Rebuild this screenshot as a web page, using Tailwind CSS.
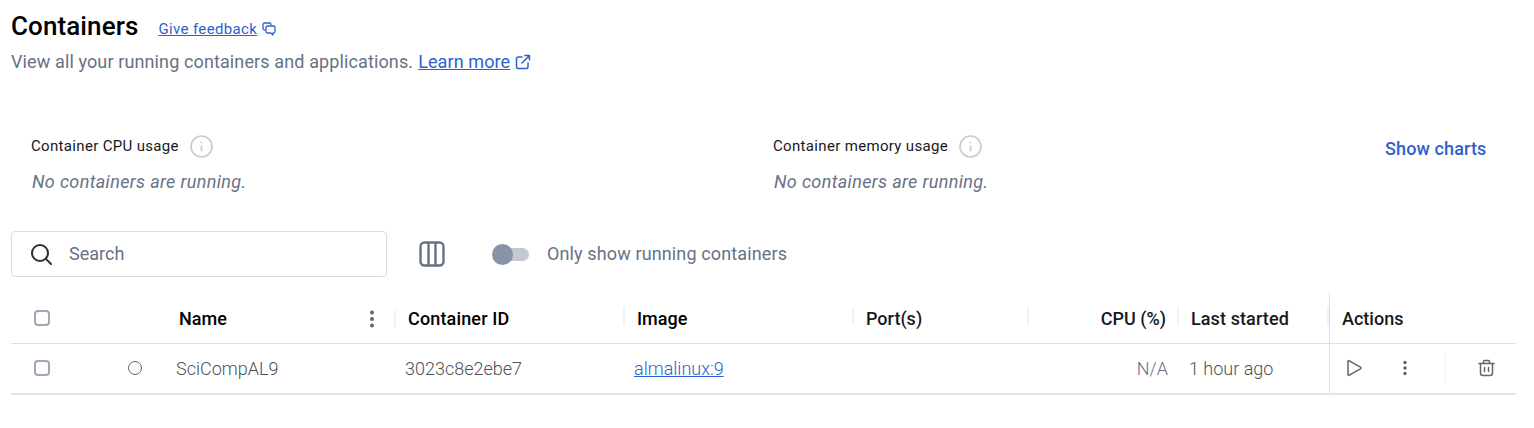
<!DOCTYPE html>
<html lang="en">
<head>
  <meta charset="UTF-8">
  <meta name="viewport" content="width=device-width, initial-scale=1.0">
  <title>Containers</title>
  <script src="https://cdn.jsdelivr.net/npm/@tailwindcss/browser@4"></script>
</head>
<body class="bg-white font-['Roboto',sans-serif] overflow-hidden">
<div class="w-[1534px] h-[428px] pl-[11px] pr-[18px]">

    <!-- page title -->
    <div class="flex items-center h-[26px] mt-[13px]">
        <h1 class="text-[26px] leading-[26px] tracking-[0.1px] font-medium text-black">Containers</h1>
        <a href="#" class="ml-[20px] mt-[5px] text-[15px] leading-[20px] tracking-[0.35px] text-[#2e5fd0] underline">Give feedback</a>
        <svg class="ml-[5px] mt-[6px]" width="14" height="14" viewBox="0 0 14 14" fill="none" stroke="#2e5fd0" stroke-width="1.3" stroke-linejoin="round">
            <path d="M9 3V2.500A1.500 1.500 0 0 0 7.500 1H2.500A1.500 1.500 0 0 0 1 2.500V6.500A1.500 1.500 0 0 0 2.500 8H3.500"/>
            <path d="M5.500 4H11.500A1.500 1.500 0 0 1 13 5.500V9.500A1.500 1.500 0 0 1 11.500 11H11V13L8.800 11H5.500A1.500 1.500 0 0 1 4 9.500V5.500A1.500 1.500 0 0 1 5.500 4Z"/>
        </svg>
    </div>
    <div class="flex items-center h-[24px] mt-[11px] text-[18px] leading-[24px] text-[#677285]">
        <span class="tracking-[0.12px]">View all your running containers and applications.</span>
        <a href="#" class="ml-[5px] tracking-[0.1px] text-[#2e5fd0] underline">Learn more</a>
        <svg class="ml-[5px]" width="16" height="16" viewBox="0 0 16 16" fill="none" stroke="#2e5fd0" stroke-width="1.500" stroke-linecap="round" stroke-linejoin="round">
            <path d="M7 3H3A1.500 1.500 0 0 0 1.500 4.500V13A1.500 1.500 0 0 0 3 14.500H11.500A1.500 1.500 0 0 0 13 13V9"/>
            <path d="M10 1.500H14.500V6M14.500 1.500L7 9"/>
        </svg>
    </div>

    <!-- usage stats -->
    <div class="flex mt-[60px] h-[60px]">
        <div class="w-[742px] pl-[20px]">
            <div class="flex items-center h-[23px] pt-[1px]">
                <span class="text-[15px] tracking-[0.33px] text-[#17191e]">Container CPU usage</span>
                <svg class="ml-[11px]" width="23" height="23" viewBox="0 0 23 23" fill="none">
                    <circle cx="11.500" cy="11.500" r="10.500" stroke="#c9cdd3" stroke-width="1.700"/>
                    <path d="M11.500 10.500V16.500" stroke="#c9cdd3" stroke-width="1.700"/>
                    <circle cx="11.500" cy="7.500" r="1" fill="#c9cdd3"/>
                </svg>
            </div>
            <p class="mt-[13px] ml-[1px] text-[18px] leading-[24px] tracking-[0.35px] italic text-[#677285]">No containers are running.</p>
        </div>
        <div class="w-[632px] pl-[20px]">
            <div class="flex items-center h-[23px] pt-[1px]">
                <span class="text-[15px] tracking-[0.33px] text-[#17191e]">Container memory usage</span>
                <svg class="ml-[11px]" width="23" height="23" viewBox="0 0 23 23" fill="none">
                    <circle cx="11.500" cy="11.500" r="10.500" stroke="#c9cdd3" stroke-width="1.700"/>
                    <path d="M11.500 10.500V16.500" stroke="#c9cdd3" stroke-width="1.700"/>
                    <circle cx="11.500" cy="7.500" r="1" fill="#c9cdd3"/>
                </svg>
            </div>
            <p class="mt-[13px] ml-[1px] text-[18px] leading-[24px] tracking-[0.35px] italic text-[#677285]">No containers are running.</p>
        </div>
        <a href="#" class="mt-[3px] text-[18px] leading-[24px] tracking-[0.12px] font-medium text-[#2e5fd0]">Show charts</a>
    </div>

    <!-- toolbar -->
    <div class="flex items-center mt-[37px] h-[46px]">
        <div class="flex items-center w-[376px] h-[46px] border border-[#d9dce1] rounded-[4px] pl-[18px]">
            <svg width="22" height="22" viewBox="0 0 22 22" fill="none" stroke="#2b3038" stroke-width="2" stroke-linecap="round">
                <circle cx="10" cy="10" r="8"/>
                <path d="M16 16L21 21"/>
            </svg>
            <span class="ml-[17px] mb-[2px] text-[18px] text-[#677285]">Search</span>
        </div>
        <svg class="ml-[32px]" width="26" height="26" viewBox="0 0 26 26" fill="none" stroke="#677285" stroke-width="2.400">
            <rect x="1.500" y="1.500" width="23" height="23" rx="4"/>
            <path d="M9.500 1.500V24.500M16.500 1.500V24.500"/>
        </svg>
        <div class="relative ml-[47px] w-[37px] h-[21px] flex items-center">
            <div class="absolute left-[1px] right-0 h-[13px] rounded-full bg-[#c4c8d1]"></div>
            <div class="absolute left-0 w-[21px] h-[21px] rounded-full bg-[#8993a8]"></div>
        </div>
        <span class="ml-[18px] mb-[2px] text-[18px] tracking-[0.13px] text-[#677285]">Only show running containers</span>
    </div>

    <!-- table -->
    <div class="mt-[16px] w-[1505px] relative text-[18px]">
        <div class="flex h-[51px] border-b border-[#dcdfe3] font-medium text-[#17191e] items-center pt-[1px]">
            <div class="w-[384px] flex items-center relative h-full">
                <span class="ml-[23px] mb-[2px] w-[16px] h-[16px] border-2 border-[#a0a7b6] rounded-[4px]"></span>
                <span class="ml-[129px] text-black">Name</span>
                <svg class="absolute left-[358px] top-[16px]" width="6" height="18" viewBox="0 0 6 18" fill="#5d6675">
                    <circle cx="3" cy="2.500" r="2"/><circle cx="3" cy="9" r="2"/><circle cx="3" cy="15.500" r="2"/>
                </svg>
                <span class="absolute right-[-1px] top-[16px] w-[2px] h-[18px] bg-[#f1f2f4]"></span>
            </div>
            <div class="w-[229px] pl-[13px] relative text-black tracking-[0.15px]">Container ID<span class="absolute right-[-1px] top-[2px] w-[2px] h-[18px] bg-[#f1f2f4]"></span></div>
            <div class="w-[229px] pl-[13px] relative text-black">Image<span class="absolute right-[-1px] top-[2px] w-[2px] h-[18px] bg-[#f1f2f4]"></span></div>
            <div class="w-[175px] pl-[13px] relative text-[#17191e]">Port(s)<span class="absolute right-[-1px] top-[2px] w-[2px] h-[18px] bg-[#f1f2f4]"></span></div>
            <div class="w-[150px] pr-[12px] text-right relative">CPU (%)<span class="absolute right-[-1px] top-[2px] w-[2px] h-[18px] bg-[#f1f2f4]"></span></div>
            <div class="w-[151px] pl-[13px] relative tracking-[0.1px]">Last started<span class="absolute right-0 top-[2px] w-[2px] h-[18px] bg-[#f1f2f4]"></span></div>
            <div class="pl-[13px]">Actions</div>
        </div>
        <div class="flex h-[51px] border-b-2 border-[#e3e5e8] items-center text-[#4a505b] font-light pb-[1px]">
            <div class="w-[384px] flex items-center">
                <span class="ml-[23px] w-[16px] h-[16px] border-2 border-[#a0a7b6] rounded-[4px]"></span>
                <span class="ml-[78px] w-[14px] h-[14px] border border-[#5d6675] rounded-full"></span>
                <span class="ml-[34px]">SciCompAL9</span>
            </div>
            <div class="w-[229px] pl-[10px]">3023c8e2ebe7</div>
            <div class="w-[229px] pl-[10px]"><a href="#" class="text-[#2e5fd0] underline">almalinux:9</a></div>
            <div class="w-[175px]"></div>
            <div class="w-[150px] pr-[10px] text-right text-[#677285]">N/A</div>
            <div class="w-[151px] pl-[11px]">1 hour ago</div>
            <div class="flex items-center h-full relative">
                <svg class="ml-[16px]" width="18" height="18" viewBox="0 0 18 18" fill="none" stroke="#5d6675" stroke-width="1.500" stroke-linejoin="round">
                    <path d="M3 2.500C3 1.800 3.700 1.400 4.300 1.800L15.500 8.200C16.100 8.600 16.100 9.400 15.500 9.800L4.300 16.200C3.700 16.600 3 16.200 3 15.500Z"/>
                </svg>
                <svg class="ml-[40px]" width="4" height="16" viewBox="0 0 4 16" fill="#5d6675">
                    <circle cx="2" cy="2.500" r="1.700"/><circle cx="2" cy="8" r="1.700"/><circle cx="2" cy="13.500" r="1.700"/>
                </svg>
                <span class="ml-[38px] w-px h-[32px] bg-[#f1f2f4]"></span>
                <svg class="ml-[32px]" width="17" height="18" viewBox="0 0 17 18" fill="none" stroke="#5d6675" stroke-width="1.500" stroke-linecap="round" stroke-linejoin="round">
                    <path d="M1 4.500H16M5.500 4.500V2.500A1 1 0 0 1 6.500 1.500H10.500A1 1 0 0 1 11.500 2.500V4.500"/>
                    <path d="M2.500 4.500V14A2.500 2.500 0 0 0 5 16.500H12A2.500 2.500 0 0 0 14.500 14V4.500"/>
                    <path d="M6.500 8.500V12.500M10.500 8.500V12.500"/>
                </svg>
            </div>
        </div>
        <div class="absolute left-[1318px] top-0 bottom-[2px] w-px bg-[#dcdfe3]"></div>
    </div>
</div>
</body>
</html>
